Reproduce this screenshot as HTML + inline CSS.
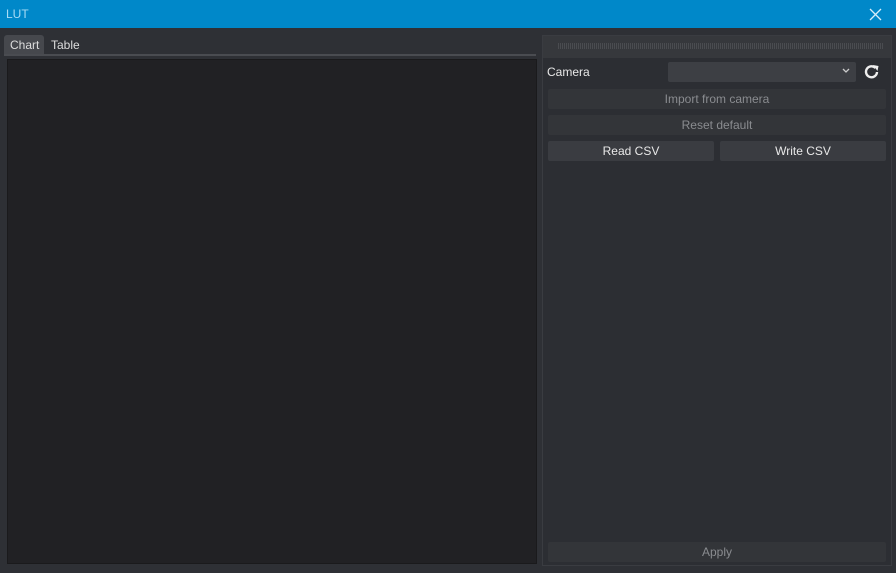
<!DOCTYPE html>
<html><head><style>
*{margin:0;padding:0;box-sizing:border-box}
body{width:896px;height:573px;background:#2e3035;font-family:"Liberation Sans",sans-serif;font-size:12px;color:#e8e8e8;position:relative;overflow:hidden}
.a{position:absolute}
.btn{position:absolute;background:#3a3c41;border-radius:2px;text-align:center;line-height:20px;height:20px}
.dis{color:#8a8c90;background:#333539}
</style></head><body>
<div class="a" style="left:0;top:0;width:896px;height:28px;background:#0088c9"></div>
<div class="a" style="left:6px;top:7px;color:#a8dcf5;font-size:12px">LUT</div>
<svg class="a" style="left:869px;top:8px" width="13" height="13"><path d="M1 1L12 12M12 1L1 12" stroke="#d8eef9" stroke-width="1.3"/></svg>
<div class="a" style="left:4px;top:35px;width:40px;height:20px;background:#46484d;border-radius:3px 3px 0 0"></div>
<div class="a" style="left:10px;top:38px;color:#ddd">Chart</div>
<div class="a" style="left:51px;top:38px;color:#ddd">Table</div>
<div class="a" style="left:4px;top:54px;width:532px;height:2px;background:#4a4c51"></div>
<div class="a" style="left:7px;top:59px;width:530px;height:505px;background:#212124;border:1px solid #1a1a1c"></div>
<div class="a" style="left:542px;top:35px;width:350px;height:531px;background:#2c2e33;border:1px solid #3a3c41"></div>
<div class="a" style="left:543px;top:36px;width:348px;height:22px;background:#36383c"></div>
<div class="a" style="left:558px;top:43px;width:326px;height:6px;background:repeating-linear-gradient(90deg,#4a4c50 0 1px,transparent 1px 2px)"></div>
<div class="a" style="left:547px;top:65px">Camera</div>
<div class="a" style="left:668px;top:62px;width:188px;height:20px;background:#3d3f44;border-radius:2px"></div>
<svg class="a" style="left:842px;top:68px" width="8" height="6"><path d="M1 1L4 4L7 1" stroke="#ccc" stroke-width="1.3" fill="none"/></svg>
<svg class="a" style="left:863px;top:63px" width="18" height="18"><path d="M14 9A5.5 5.5 0 1 1 12.5 5" stroke="#eee" stroke-width="2.4" fill="none"/><path d="M10 2L15.5 3L14.5 8Z" fill="#eee"/></svg>
<div class="btn dis" style="left:548px;top:89px;width:338px">Import from camera</div>
<div class="btn dis" style="left:548px;top:115px;width:338px">Reset default</div>
<div class="btn" style="left:548px;top:141px;width:166px">Read CSV</div>
<div class="btn" style="left:720px;top:141px;width:166px">Write CSV</div>
<div class="btn dis" style="left:548px;top:542px;width:338px">Apply</div>
</body></html>
